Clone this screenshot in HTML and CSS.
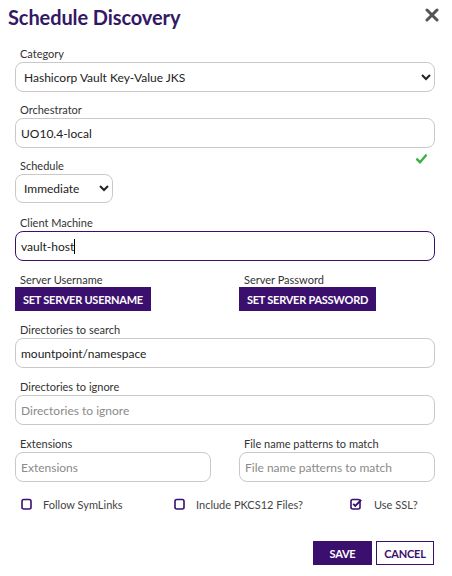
FILE: index.html
```html
<!DOCTYPE html>
<html>
<head>
<meta charset="utf-8">
<link rel="stylesheet" href="styles.css">
</head>
<body>
<div class="dialog">
  <div class="header">
    <h1 class="title">Schedule Discovery</h1>
    <svg class="close" width="14" height="14" viewBox="0 0 14 14"><path d="M2 2 L12 12 M12 2 L2 12" stroke="#555" stroke-width="3" stroke-linecap="round"/></svg>
  </div>
  <form class="form">
    <div class="field loose">
      <label class="label">Category</label>
      <select class="control">
        <option>Hashicorp Vault Key-Value JKS</option>
      </select>
    </div>
    <div class="field loose">
      <label class="label">Orchestrator</label>
      <input class="control" value="UO10.4-local">
    </div>
    <div class="field schedule">
      <div class="label-row">
        <label class="label">Schedule</label>
        <svg class="valid" width="11" height="10" viewBox="0 0 11 10"><path d="M1.2 5.4 L4 8.2 L9.8 1.6" fill="none" stroke="#3cb043" stroke-width="2.4" stroke-linecap="square"/></svg>
      </div>
      <select class="control small">
        <option>Immediate</option>
      </select>
    </div>
    <div class="field">
      <label class="label">Client Machine</label>
      <div class="control focused"><span class="typed">vault-host</span><span class="caret"></span></div>
    </div>
    <div class="field grid2">
      <div>
        <label class="label tight">Server Username</label>
        <button type="button" class="btn primary">SET SERVER USERNAME</button>
      </div>
      <div>
        <label class="label tight">Server Password</label>
        <button type="button" class="btn primary">SET SERVER PASSWORD</button>
      </div>
    </div>
    <div class="field">
      <label class="label">Directories to search</label>
      <input class="control" value="mountpoint/namespace">
    </div>
    <div class="field">
      <label class="label">Directories to ignore</label>
      <input class="control" placeholder="Directories to ignore">
    </div>
    <div class="field grid2 last">
      <div>
        <label class="label">Extensions</label>
        <input class="control ext" placeholder="Extensions">
      </div>
      <div>
        <label class="label">File name patterns to match</label>
        <input class="control ext" placeholder="File name patterns to match">
      </div>
    </div>
    <div class="checks">
      <div class="check">
        <svg width="11" height="12" viewBox="0 0 11 12"><rect x="1" y="1.5" width="9" height="9.5" rx="1.8" fill="none" stroke="#3b0f6e" stroke-width="1.6"/></svg>
        <span>Follow SymLinks</span>
      </div>
      <div class="check">
        <svg width="11" height="12" viewBox="0 0 11 12"><rect x="1" y="1.5" width="9" height="9.5" rx="1.8" fill="none" stroke="#3b0f6e" stroke-width="1.6"/></svg>
        <span>Include PKCS12 Files?</span>
      </div>
      <div class="check">
        <svg width="13" height="12" viewBox="0 0 13 12"><rect x="1" y="1.5" width="9" height="9.5" rx="1.8" fill="none" stroke="#3b0f6e" stroke-width="1.6"/><path d="M3.2 5.8 L5.3 7.9 L11.2 1.8" fill="none" stroke="#3b0f6e" stroke-width="1.9"/></svg>
        <span>Use SSL?</span>
      </div>
    </div>
    <div class="footer">
      <button type="button" class="btn primary save">SAVE</button>
      <button type="button" class="btn outline">CANCEL</button>
    </div>
  </form>
</div>
</body>
</html>
```
FILE: styles.css
```css
* { box-sizing: border-box; }
html, body { margin: 0; padding: 0; background: #fff; }
body { font-family: Lato, "Liberation Sans", sans-serif; color: #222; width: 452px; height: 576px; overflow: hidden; }

.dialog { padding-top: 5px; }
.header { display: flex; justify-content: space-between; align-items: flex-start; padding: 0 13px 0 8px; margin-bottom: 17px; }
.title { margin: 0; font-size: 20px; line-height: 24px; font-weight: 700; color: #331866; letter-spacing: -0.1px; }
.close { margin-top: 3px; }

.form { padding: 0 17px 0 15px; }
.field { margin-bottom: 11px; }
.field.loose { margin-bottom: 10px; }
.field.schedule { margin-bottom: 12px; }
.field.last { margin-bottom: 0; }

.label { display: block; font-size: 11px; line-height: 15px; color: #333; padding-left: 5px; margin-bottom: 1px; }
.label.tight { margin-bottom: 0; }
.label-row { display: flex; justify-content: space-between; align-items: flex-start; padding-right: 8px; }
.valid { margin-top: -4px; }

.control { display: block; width: 100%; height: 30px; border: 1px solid #c9c9c9; border-radius: 8px; background: #fff; font-family: Lato, "Liberation Sans", sans-serif; font-size: 12px; color: #222; padding: 0 5px; outline: none; }
select.control { padding: 0 4px; }
.control.small { width: 98px; height: 29px; }
.control.ext { height: 30px; }
.control::placeholder { color: #8a8a8a; }
.control.focused { display: flex; align-items: center; border: 1.3px solid #3b0f6e; }
.caret { display: inline-block; width: 1px; height: 15px; background: #000; margin-left: 0; }

.grid2 { display: grid; grid-template-columns: 1fr 1fr; column-gap: 28px; }

.btn { font-family: Lato, "Liberation Sans", sans-serif; font-weight: 700; font-size: 11px; cursor: pointer; border-radius: 0; }
.btn.primary { background: #3b0f6e; color: #fff; border: 1px solid #3b0f6e; height: 24px; padding: 0 7px; letter-spacing: -0.25px; }
.btn.outline { background: #fff; color: #3b0f6e; border: 1px solid #3b0f6e; height: 24px; width: 58px; padding: 0; letter-spacing: -0.2px; }
.btn.save { width: 59px; padding: 0; }

.checks { display: grid; grid-template-columns: 153px 176px auto; padding-left: 6px; margin-top: 14px; height: 16px; align-items: center; }
.check { display: flex; align-items: center; gap: 11px; font-size: 11px; color: #444; }

.footer { display: flex; justify-content: flex-end; gap: 4px; margin-top: 29px; padding-right: 1px; }
```
